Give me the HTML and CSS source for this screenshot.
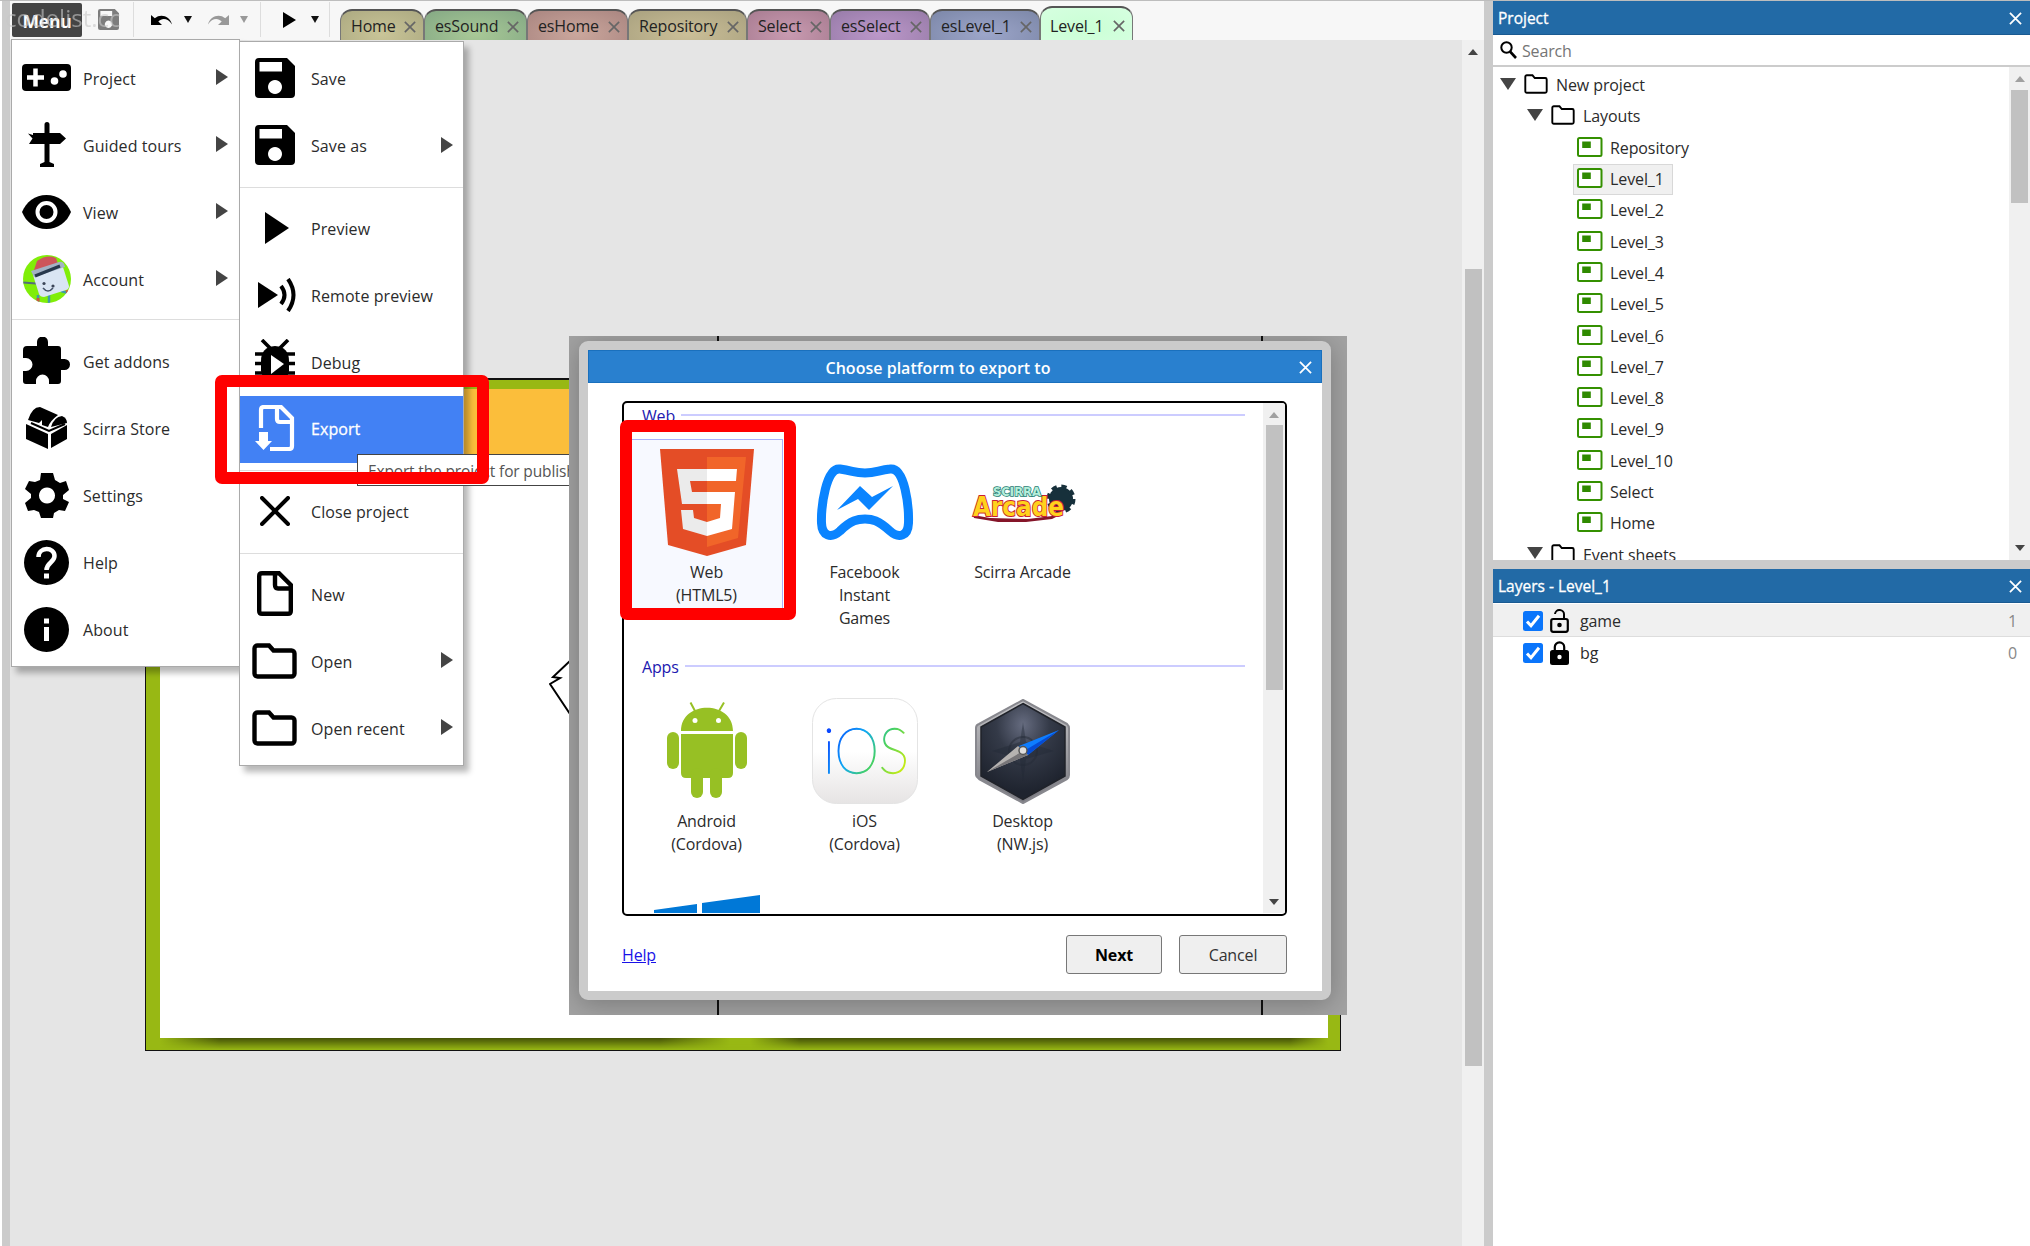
FILE: index.html
```html
<!DOCTYPE html>
<html lang="en">
<head>
<meta charset="utf-8">
<title>Level_1</title>
<link rel="stylesheet" href="styles.css">
</head>
<body>
<svg class="defs" width="0" height="0">
  <defs>
    <symbol id="save" viewBox="0 0 40 40"><path fill-rule="evenodd" d="M4 0H32L40 8V36a4 4 0 0 1-4 4H4a4 4 0 0 1-4-4V4a4 4 0 0 1 4-4ZM4.500 4V13.500H27V4ZM20 22a7 7 0 1 0 .01 0Z"/></symbol>
    <symbol id="folder" viewBox="0 0 45 36"><path d="M2.500 5.500a3 3 0 0 1 3-3H17l4.500 5H39.500a3 3 0 0 1 3 3V30.500a3 3 0 0 1-3 3H5.500a3 3 0 0 1-3-3Z" fill="none" stroke="#000" stroke-width="4.400"/></symbol>
    <symbol id="folder-s" viewBox="0 0 24 20"><path d="M1.300 2.800a1.500 1.500 0 0 1 1.500-1.500H8.500L10.800 4H21.200a1.500 1.500 0 0 1 1.500 1.500V17.200a1.500 1.500 0 0 1-1.500 1.500H2.800a1.500 1.500 0 0 1-1.500-1.500Z" fill="none" stroke="#000" stroke-width="1.900"/></symbol>
    <symbol id="sheet" viewBox="0 0 26 20"><rect x="1" y="1" width="23.500" height="18" rx="1.500" fill="#fff" stroke="#349000" stroke-width="2"/><rect x="5.200" y="4.500" width="8.600" height="6.500" fill="#2f8a00"/></symbol>
    <symbol id="x" viewBox="0 0 14 14"><path d="M1 1L13 13M13 1L1 13" fill="none" stroke="currentColor" stroke-width="1.900"/></symbol>
    <symbol id="undo" viewBox="0 0 24 12"><path d="M1 1V11H12L8.300 7.500C12 3.500 18 4 22 10.500C20 2.500 11-1 4.800 4.300Z"/></symbol>
  </defs>
</svg>

<div class="app">
  <div class="edge"></div>
  <main class="editor">
    <header class="toolbar">
      <div class="menu-btn">Menu</div>
      <div class="tool save"><svg width="21" height="21" fill="#7d7d7d"><use href="#save"/></svg></div>
      <div class="tool pair"><svg width="24" height="12"><use href="#undo"/></svg><i class="drop"></i><svg class="flip" width="24" height="12" fill="#999"><use href="#undo"/></svg><i class="drop off"></i></div>
      <div class="tool run"><svg width="13" height="16"><path d="M0 0L13 8L0 16Z"/></svg><i class="drop"></i></div>
      <nav class="tabs">
        <div class="tab t1">Home<svg><use href="#x"/></svg></div>
        <div class="tab t2">esSound<svg><use href="#x"/></svg></div>
        <div class="tab t3">esHome<svg><use href="#x"/></svg></div>
        <div class="tab t4">Repository<svg><use href="#x"/></svg></div>
        <div class="tab t5">Select<svg><use href="#x"/></svg></div>
        <div class="tab t6">esSelect<svg><use href="#x"/></svg></div>
        <div class="tab t7">esLevel_1<svg><use href="#x"/></svg></div>
        <div class="tab t8">Level_1<svg><use href="#x"/></svg></div>
      </nav>
    </header>
    <section class="stage">
      <div class="canvas">
        <div class="layout">
          <div class="sky"></div>
          <div class="shade"></div>
        </div>
        <svg class="spark" width="20" height="56"><path d="M21 2L4 18L11 19L1 25L21 55" fill="none" stroke="#000" stroke-width="2"/></svg>
      </div>
      <div class="scroll main-scroll"><i class="up dark"></i><b></b></div>
    </section>
  </main>
  <div class="edge split"></div>
  <aside class="side">
    <div class="bar">Project<svg><use href="#x"/></svg></div>
    <div class="search"><svg width="17" height="18" viewBox="0 0 17 18"><circle cx="6.500" cy="6.500" r="5.200" fill="none" stroke="#000" stroke-width="2"/><path d="M10 10.500L16 17" stroke="#000" stroke-width="2.600"/></svg>Search</div>
    <div class="tree-wrap">
      <ul class="tree">
        <li><i class="exp"></i><svg class="fold"><use href="#folder-s"/></svg>New project</li>
        <li class="l1"><i class="exp"></i><svg class="fold"><use href="#folder-s"/></svg>Layouts</li>
        <li class="l2"><span><svg><use href="#sheet"/></svg>Repository</span></li>
        <li class="l2"><span class="sel"><svg><use href="#sheet"/></svg>Level_1</span></li>
        <li class="l2"><span><svg><use href="#sheet"/></svg>Level_2</span></li>
        <li class="l2"><span><svg><use href="#sheet"/></svg>Level_3</span></li>
        <li class="l2"><span><svg><use href="#sheet"/></svg>Level_4</span></li>
        <li class="l2"><span><svg><use href="#sheet"/></svg>Level_5</span></li>
        <li class="l2"><span><svg><use href="#sheet"/></svg>Level_6</span></li>
        <li class="l2"><span><svg><use href="#sheet"/></svg>Level_7</span></li>
        <li class="l2"><span><svg><use href="#sheet"/></svg>Level_8</span></li>
        <li class="l2"><span><svg><use href="#sheet"/></svg>Level_9</span></li>
        <li class="l2"><span><svg><use href="#sheet"/></svg>Level_10</span></li>
        <li class="l2"><span><svg><use href="#sheet"/></svg>Select</span></li>
        <li class="l2"><span><svg><use href="#sheet"/></svg>Home</span></li>
        <li class="l1"><i class="exp"></i><svg class="fold"><use href="#folder-s"/></svg>Event sheets</li>
      </ul>
      <div class="scroll tree-scroll"><i class="up"></i><b></b><i class="down"></i></div>
    </div>
    <div class="hsplit"></div>
    <div class="bar">Layers - Level_1<svg><use href="#x"/></svg></div>
    <div class="layer on">
      <svg width="20" height="20" viewBox="0 0 20 20"><rect width="20" height="20" rx="2.500" fill="#0a75fb"/><path d="M4 10.500L8 14.800L16 4.800" fill="none" stroke="#fff" stroke-width="3"/></svg>
      <svg width="19" height="24" viewBox="0 0 19 24"><path d="M5 5a4.400 4.400 0 0 1 9 1V10" fill="none" stroke="#000" stroke-width="2"/><rect x="1.200" y="10" width="16.600" height="12.800" rx="2" fill="none" stroke="#000" stroke-width="2.200"/><circle cx="9.500" cy="16" r="2.300"/></svg>
      <span>game</span><em>1</em>
    </div>
    <div class="layer">
      <svg width="20" height="20" viewBox="0 0 20 20"><rect width="20" height="20" rx="2.500" fill="#0a75fb"/><path d="M4 10.500L8 14.800L16 4.800" fill="none" stroke="#fff" stroke-width="3"/></svg>
      <svg width="19" height="24" viewBox="0 0 19 24"><path d="M4.800 10V6a4.700 4.700 0 0 1 9.400 0V10" fill="none" stroke="#000" stroke-width="2.200"/><rect y="9" width="19" height="15" rx="2.500"/><circle cx="9.500" cy="16" r="2.200" fill="#fff"/></svg>
      <span>bg</span><em>0</em>
    </div>
  </aside>
</div>

<div class="watermark">codelist.cc</div>

<div class="menu first">
  <div class="item"><span class="ic"><svg width="49" height="27" viewBox="0 0 49 27"><rect width="49" height="27" rx="4"/><path d="M5 13.500H22M13.500 4.500V22.500" stroke="#fff" stroke-width="4.500"/><circle cx="32.500" cy="17" r="3.800" fill="#fff"/><circle cx="41" cy="10" r="3.800" fill="#fff"/></svg></span>Project<i class="sub"></i></div>
  <div class="item"><span class="ic"><svg width="38" height="45" viewBox="0 0 38 45"><path d="M16.500 11V2.500a2.500 2.500 0 0 1 5 0V11H32L38 16.500L32 22H21.500V40L26 42V45H12V42L16.500 40V22H1L4.500 16.500L0 11.500L5 13V11Z"/></svg></span>Guided tours<i class="sub"></i></div>
  <div class="item"><span class="ic"><svg width="49" height="34" viewBox="0 0 49 34"><path d="M0 17C4 7 13 0 24.500 0S45 7 49 17C45 27 36 34 24.500 34S4 27 0 17Z"/><circle cx="24.500" cy="17" r="9" stroke="#fff" stroke-width="4"/></svg></span>View<i class="sub"></i></div>
  <div class="item"><span class="ic"><svg width="48" height="48" viewBox="0 0 48 48"><clipPath id="av"><circle cx="24" cy="24" r="24"/></clipPath><g clip-path="url(#av)"><rect width="48" height="48" fill="#80ee08"/><path d="M15 40V48M26 38V48M38 36L45 38" stroke="#3f9aa8" stroke-width="2.500"/><path d="M0 27.500L13 28.500" stroke="#546c7c" stroke-width="2"/><path d="M10 20L39 9L46 31Q46 34 43 35L21 42Q17 42 16 39Z" fill="#d9e5f3"/><path d="M11 15L14 6Q24-1 33 3L35 9L13 17Z" fill="#cd555a"/><path d="M8 16L36 7Q41 6 42 12L11 22Z" fill="#a3b2c4"/><path d="M12 21L37 11" stroke="#27384c" stroke-width="3"/><path d="M20 33Q25 39 30 33" fill="none" stroke="#445268" stroke-width="1.500"/><circle cx="21" cy="28.500" r="1.600" fill="#3c4658"/><circle cx="30" cy="31" r="1.600" fill="#3c4658"/><path d="M15 43V48M43 37L47 36" stroke="#d0563e" stroke-width="3"/></g></svg></span>Account<i class="sub"></i></div>
  <hr>
  <div class="item"><span class="ic"><svg width="47" height="47" viewBox="0 0 47 47"><path d="M4 9H14V5a5.500 5.500 0 0 1 11 0V9H35Q38 9 38 12V22H41.500a5.500 5.500 0 0 1 0 11H38V44Q38 47 35 47H26V44a6.500 6.500 0 0 0-13 0V47H3Q0 47 0 44V34H3a6.500 6.500 0 0 0 0-13H0V13Q0 9 4 9Z"/></svg></span>Get addons</div>
  <div class="item"><span class="ic"><svg width="41" height="42" viewBox="0 0 41 42"><path d="M2 13Q6 0 14 0L32 8Q24 14 22 20L16 18V13L13 16Z"/><path d="M25 20Q28 10 36 9Q41 11 41 16Z"/><path d="M0 17L22 27V42L0 32ZM25 27L41 18V32L25 41Z"/><path d="M5 16L23 24L39 17" fill="none" stroke="#000" stroke-width="2"/></svg></span>Scirra Store</div>
  <div class="item"><span class="ic"><svg width="44" height="45" viewBox="0 0 44 45"><path fill-rule="evenodd" d="M16 0H28L30 7L35 10L41 8L44 17L38 22L38 26L44 29L40 38L34 37L29 40L28 45H16L14 39L9 37L3 38L0 30L6 25V21L0 16L4 8L10 9L15 7ZM22 14.500a8 8 0 1 0 .01 0Z"/></svg></span>Settings</div>
  <div class="item"><span class="ic"><svg width="45" height="45" viewBox="0 0 45 45"><circle cx="22.500" cy="22.500" r="22.500"/><path d="M14.500 17C14.500 6.500 30.500 6.500 30.500 16C30.500 22.500 22.500 22.500 22.500 30" fill="none" stroke="#fff" stroke-width="4.500"/><rect x="20" y="33.500" width="5" height="5" fill="#fff"/></svg></span>Help</div>
  <div class="item"><span class="ic"><svg width="45" height="45" viewBox="0 0 45 45"><circle cx="22.500" cy="22.500" r="22.500"/><path d="M20 11.500H25V16.500H20ZM20 20H25V34H20Z" fill="#fff"/></svg></span>About</div>
</div>

<div class="menu second">
  <div class="item"><span class="ic"><svg width="40" height="40"><use href="#save"/></svg></span>Save</div>
  <div class="item"><span class="ic"><svg width="40" height="40"><use href="#save"/></svg></span>Save as<i class="sub"></i></div>
  <hr>
  <div class="item"><span class="ic"><svg width="24" height="32" viewBox="0 0 24 32" class="shift"><path d="M0 0L24 16L0 32Z"/></svg></span>Preview</div>
  <div class="item"><span class="ic"><svg width="38" height="34" viewBox="0 0 38 34" class="shift"><path d="M0 4L20 17L0 30Z"/><path d="M23 8Q30 17 23 26M30 1Q41 17 30 33" fill="none" stroke="#000" stroke-width="4"/></svg></span>Remote preview</div>
  <div class="item"><span class="ic"><svg width="40" height="46" viewBox="0 0 40 46"><path d="M7 1L16 10M33 1L24 10M0 15H40M0 24.500H40M0 34H40" fill="none" stroke="#000" stroke-width="3.600"/><path d="M6 22Q6 8 20 7Q34 8 34 22V32Q32 44 20 46Q8 44 6 32Z"/><path d="M16 16L29 25L16 35Z" fill="#fff"/></svg></span>Debug</div>
  <div class="item hot"><span class="ic"><svg width="40" height="46" viewBox="0 0 40 46"><path d="M6 23V5Q6 2 9 2H26L37 13V41Q37 44 34 44H15M22 2V14Q22 17 25 17H37" fill="none" stroke="#fff" stroke-width="4.200"/><path d="M4 27H13V36H17L8.500 45L0 36H4Z" fill="#fff"/></svg></span>Export</div>
  <hr>
  <div class="item"><span class="ic"><svg width="30" height="30" viewBox="0 0 30 30"><path d="M2 2L28 28M28 2L2 28" stroke="#000" stroke-width="4" stroke-linecap="round"/></svg></span>Close project</div>
  <hr>
  <div class="item"><span class="ic"><svg width="36" height="45" viewBox="0 0 36 45"><path d="M2.200 5Q2.200 2.200 5 2.200H22L33.800 14V40Q33.800 42.800 31 42.800H5Q2.200 42.800 2.200 40ZM18 2V14Q18 17.500 21 17.500H34" fill="none" stroke="#000" stroke-width="4.400"/></svg></span>New</div>
  <div class="item"><span class="ic"><svg width="45" height="36"><use href="#folder"/></svg></span>Open<i class="sub"></i></div>
  <div class="item"><span class="ic"><svg width="45" height="36"><use href="#folder"/></svg></span>Open recent<i class="sub"></i></div>
</div>

<div class="tooltip">Export the project for publishing</div>

<div class="backdrop">
  <div class="dialog">
    <div class="title">Choose platform to export to<svg><use href="#x"/></svg></div>
    <div class="content">
      <div class="list">
        <div class="groups">
          <h3><span>Web</span></h3>
          <div class="grid">
            <div class="plat picked"><svg viewBox="0 0 106 106"><path d="M6 0H100L92 96L53 107L14 96Z" fill="#e44d26"/><path d="M53 8H92L84 89L53 98Z" fill="#f16529"/><path d="M53 20H23L28 55H53V43H38L36 32H53ZM53 73L40 69L39 61H27L29 80L53 87Z" fill="#ebebeb"/><path d="M53 20H83L82 32H53ZM53 43H81L78 80L53 87V73L66 69L67 55H53Z" fill="#fff"/></svg><p>Web<br>(HTML5)</p></div>
            <div class="plat"><svg viewBox="0 0 106 106"><path d="M28 20C42 22 42 24 53 24S67 21 78 20C93 18 97 58 96.500 74C96 87 87 90 78 82C66 71 60 70 53 70S39 71 28 82C19 90 10 87 9.500 74C9 58 14 18 28 20Z" fill="none" stroke="#0a84ff" stroke-width="9"/><path d="M25 61L48 37L60 48L81 37L57 61L46 50Z" fill="#0a84ff"/></svg><p>Facebook<br>Instant<br>Games</p></div>
            <div class="plat"><svg viewBox="0 0 106 106"><circle cx="91" cy="50" r="12" fill="#17303b"/><circle cx="91" cy="50" r="12" fill="none" stroke="#17303b" stroke-width="5" stroke-dasharray="5 4.420"/><path d="M3 66L20 69L58 70L90 66L82 70L56 73H28L4 69Z" fill="#851529"/><text x="3" y="67" class="arc" textLength="91" lengthAdjust="spacingAndGlyphs">Arcade</text><text x="23" y="47" class="scirra" textLength="48" lengthAdjust="spacingAndGlyphs">SCIRRA</text></svg><p>Scirra Arcade</p></div>
          </div>
          <h3><span>Apps</span></h3>
          <div class="grid apps">
            <div class="plat"><svg viewBox="0 0 106 106"><g fill="#97c024"><path d="M27 33C27 2 79 2 79 33ZM27 36H79V75Q79 80 74 80H32Q27 80 27 75Z"/><rect x="13" y="34" width="12" height="37" rx="6"/><rect x="81" y="34" width="12" height="37" rx="6"/><rect x="37" y="70" width="12" height="30" rx="6"/><rect x="56" y="70" width="12" height="30" rx="6"/></g><path d="M41 13L36.500 4.500M65 13L70 4.500" stroke="#97c024" stroke-width="2"/><circle cx="41" cy="22.500" r="2.500" fill="#fff"/><circle cx="64.500" cy="22.500" r="2.500" fill="#fff"/></svg><p>Android<br>(Cordova)</p></div>
            <div class="plat"><svg viewBox="0 0 106 106"><defs><linearGradient id="ibg" x2="0" y2="1"><stop offset=".5" stop-color="#fff"/><stop offset="1" stop-color="#e6e4e4"/></linearGradient><linearGradient id="itx" gradientUnits="userSpaceOnUse" x1="20" y1="32" x2="90" y2="75"><stop stop-color="#0a48ff"/><stop offset=".35" stop-color="#10a8f4"/><stop offset=".62" stop-color="#43cf68"/><stop offset="1" stop-color="#cbed10"/></linearGradient></defs><rect x=".5" y=".5" width="105" height="105" rx="24" fill="url(#ibg)" stroke="#e4e4e4"/><text x="11" y="75" class="ios" fill="url(#itx)" stroke="url(#itx)" textLength="86" lengthAdjust="spacingAndGlyphs">iOS</text></svg><p>iOS<br>(Cordova)</p></div>
            <div class="plat"><svg viewBox="0 0 106 106"><defs><linearGradient id="rim" x2="0" y2="1"><stop stop-color="#c5c5c8"/><stop offset="1" stop-color="#77777e"/></linearGradient><radialGradient id="face" cx=".5" cy=".22" r=".7"><stop stop-color="#666c80"/><stop offset=".45" stop-color="#343a48"/><stop offset="1" stop-color="#1f242f"/></radialGradient></defs><path d="M53 2L97 26Q99 28 99 30V77Q99 80 97 81L53 105L9 81Q6 79 6 77V30Q6 27 9 26Z" fill="url(#rim)" stroke="#88888e" stroke-width="2" stroke-linejoin="round"/><path d="M53 5.500L95 29V78L53 101.500L11 78V29Z" fill="url(#face)" stroke="#20232a" stroke-width="1.500"/><circle cx="53" cy="53" r="14" fill="none" stroke="#252c38" stroke-width="2" opacity=".5"/><path d="M53 24L56 44L84 53L56 61L53 83L50 61L22 53L50 44Z" fill="#202735" opacity=".4"/><path d="M89 32L58 57L49 48Z" fill="#0e7dff"/><path d="M89 32L58 57L54 53Z" fill="#064bd3"/><path d="M17 74L48 48L58 57Z" fill="#b6b3b1"/><path d="M17 74L53 53L58 57Z" fill="#777578"/><circle cx="53" cy="52.500" r="4" fill="#dedede" stroke="#555" stroke-width="1.500"/></svg><p>Desktop<br>(NW.js)</p></div>
            <div class="plat"><svg viewBox="0 0 106 106"><path d="M0 15L43 9V50H0ZM48 8L106 0V50H48ZM0 55H43V96L0 90ZM48 55H106V105L48 97Z" fill="#0078d7"/></svg></div>
          </div>
        </div>
        <div class="scroll list-scroll"><i class="up"></i><b></b><i class="down"></i></div>
      </div>
      <div class="actions"><a>Help</a><button class="next">Next</button><button>Cancel</button></div>
    </div>
  </div>
</div>

<div class="mark export-mark"></div>
<div class="mark web-mark"></div>
</body>
</html>
```
FILE: styles.css
```css
* { box-sizing: border-box; }
body {
  margin: 0; width: 2030px; height: 1246px; overflow: hidden; position: relative;
  font: 16px/23px "Open Sans", "Noto Sans", sans-serif; letter-spacing: -0.15px;
  color: #2b2b2b; background: #fff;
}
svg { display: block; flex: none; }
.defs { position: absolute; }
.app { display: flex; height: 1246px; border-top: 1px solid #bdbdbd; padding-left: 2px; }
.edge { width: 8px; background: #cbcbcb; flex: none; }
.edge.split { width: 9px; }
.editor { width: 1474px; display: flex; flex-direction: column; flex: none; }

.toolbar { height: 39px; background: #f7f7f7; display: flex; align-items: stretch; flex: none; padding-left: 2px; }
.menu-btn { width: 70px; height: 34px; margin-top: 2px; background: #444; color: #fff; font-weight: 700; font-size: 17.500px; line-height: 37px; text-align: center; border-radius: 2px; }
.tool { display: flex; align-items: center; border-right: 1px solid #ddd; height: 35px; margin-top: 1px; }
.tool.save { width: 52px; padding-left: 16px; }
.tool.pair { width: 127px; padding-left: 16px; }
.tool.run { width: 69px; padding-left: 22px; }
.drop { border: 4px solid transparent; border-top: 7px solid #111; border-bottom: 0; margin-left: 10px; }
.pair .drop { margin-right: 14px; }
.run .drop { margin-left: 15px; }
.drop.off { border-top-color: #999; }
.flip { transform: scaleX(-1); }
.tabs { display: flex; align-items: flex-end; margin-left: 10px; }
.tab {
  height: 31px; border: 1px solid #777; border-top: 2px solid #555; border-bottom: 0; border-radius: 12px 12px 0 0;
  padding: 4px 7px 0 10px; display: flex; justify-content: space-between; color: #222; flex: none;
}
.tab svg { width: 12px; height: 12px; margin-top: 6px; color: #666; }
.t1 { width: 84px; background: radial-gradient(ellipse at 50% 80%, #c9c598, #aca981); }
.t2 { width: 103px; background: radial-gradient(ellipse at 50% 80%, #a9c997, #84a884); }
.t3 { width: 101px; background: radial-gradient(ellipse at 50% 80%, #cba79d, #a98580); }
.t4 { width: 119px; background: radial-gradient(ellipse at 50% 80%, #cbbf98, #a9a17f); }
.t5 { width: 83px; background: radial-gradient(ellipse at 50% 80%, #c99bb1, #a87c91); }
.t6 { width: 100px; background: radial-gradient(ellipse at 50% 80%, #bc98ca, #977ba8); }
.t7 { width: 110px; background: radial-gradient(ellipse at 50% 80%, #9da6ca, #7c87a8); }
.t8 { width: 93px; height: 34px; background: radial-gradient(ellipse at 50% 60%, #caffd5, #d6ffe0); padding: 7px 7px 0 9px; }
.t8 svg { margin-top: 5px; }

.stage { flex: 1; display: flex; }
.canvas { flex: 1; background: #e5e5e5; position: relative; overflow: hidden; }
.layout { position: absolute; left: 135px; top: 338px; width: 1196px; height: 673px; border: 2px solid #111; border-width: 2px 1px 1px; background: #98b814; padding: 9px 12px 12px 14px; }
.sky { height: 649px; background: linear-gradient(#fbbe3b 66px, #fff 66px); }
.shade { height: 12px; background: linear-gradient(90deg, #98b814 0, #445207 60px, #445207 500px, #98b814 570px, #98b814 590px, #445207 640px, #445207 1130px, #98b814 1168px); -webkit-mask: linear-gradient(#000, transparent); mask: linear-gradient(#000, transparent); }
.spark { position: absolute; left: 539px; top: 619px; }
.scroll { background: #f0f0f0; width: 22px; flex: none; display: flex; flex-direction: column; align-items: center; }
.scroll b { background: #c1c1c1; width: 17px; }
.up, .down { border: 5px solid transparent; flex: none; }
.up { border-bottom: 6px solid #a0a0a0; border-top: 0; }
.up.dark { border-bottom-color: #444; }
.down { border-top: 6px solid #444; border-bottom: 0; margin-top: auto; }
.main-scroll { padding-top: 9px; }
.main-scroll b { height: 797px; margin-top: 214px; }

.side { flex: 1; display: flex; flex-direction: column; min-width: 0; background: #fff; }
.bar { height: 34px; background: #226aa6; border-bottom: 1px solid #1a5a91; color: #fff; font-size: 15.500px; letter-spacing: 0; -webkit-text-stroke: 0.300px #fff; display: flex; align-items: center; justify-content: space-between; padding: 2px 8px 0 5px; flex: none; }
.bar svg, .title svg { width: 13px; height: 13px; }
.search { height: 32px; border-bottom: 2px solid #ccc; display: flex; align-items: center; gap: 5px; padding: 3px 0 0 7px; color: #757575; font-size: 16px; flex: none; }
.search svg { margin-top: -4px; }
.tree-wrap { display: flex; height: 493px; flex: none; overflow: hidden; }
.tree { list-style: none; margin: 0; padding: 2px 0 0 7px; flex: 1; font-size: 16px; letter-spacing: -0.1px; overflow: hidden; }
.tree li { height: 31.300px; display: flex; align-items: center; padding-top: 2px; }
.tree .l1 { padding-left: 27px; }
.tree .l2 { padding-left: 73px; }
.exp { border: 8px solid transparent; border-top: 12px solid #444; border-bottom: 0; margin: -4px 8px 0 0; }
.fold { width: 24px; height: 20px; margin: -3px 8px 0 0; }
.tree span { display: flex; align-items: center; height: 31px; padding: 0 8px 0 3px; border: 1px solid transparent; }
.tree span svg { width: 26px; height: 20px; margin: -3px 7px 0 0; }
.tree .sel { background: #f0f0f0; border-color: #d8d8d8; }
.tree-scroll { width: 21px; padding: 9px 0 9px; align-items: center; }
.tree-scroll b { height: 113px; margin-top: 8px; }
.hsplit { height: 9px; background: #cbcbcb; flex: none; }
.layer { height: 32px; display: flex; align-items: center; padding: 0 13px 0 30px; gap: 7px; flex: none; }
.layer.on { height: 33px; background: #f0f0f0; border-bottom: 1px solid #ddd; padding-top: 2px; margin-top: 1px; }
.layer span { flex: 1; margin-left: 4px; padding-top: 1px; }
.layer em { font-style: normal; color: #888; padding-top: 1px; }

.watermark { position: absolute; left: 5px; top: 2px; font-size: 24px; line-height: 32px; letter-spacing: 0; width: 121px; overflow: hidden; color: #c8c8c8; opacity: .6; }

.menu { position: absolute; background: #fff; border: 1px solid #aaa; box-shadow: 5px 6px 6px rgba(0,0,0,.28); letter-spacing: 0.080px; }
.menu.first { left: 11px; top: 39px; width: 229px; height: 628px; padding-top: 5px; }
.menu.second { left: 239px; top: 41px; width: 225px; height: 725px; padding-top: 4px; }
.item { height: 66.800px; display: flex; align-items: center; padding: 1px 10px 0 0; }
.first .item { height: 67.100px; padding-right: 11px; }
.ic { width: 70px; padding-right: 1px; margin: -3px 1px 0 0; flex: none; display: flex; justify-content: center; }
.ic .shift { margin-left: 5px; }
.sub { border: 8px solid transparent; border-left: 12px solid #444; border-right: 0; margin: -4px 0 0 auto; }
.menu hr { border: 0; height: 1px; background: #ddd; margin: 7px 0 8px; }
.first hr { margin: 6px 0 8px; }
.hot { background: #4281f4; color: #fff; -webkit-text-stroke: 0.300px #fff; }

.tooltip { position: absolute; left: 357px; top: 454px; width: 230px; height: 32px; background: #fff; border: 1px solid #444; padding: 5px 10px; white-space: nowrap; overflow: hidden; color: #555; font-size: 15.500px; }

.backdrop { position: absolute; left: 569px; top: 336px; width: 778px; height: 679px; padding: 5px 16px 14px 10px; overflow: hidden;
  background: linear-gradient(90deg, transparent 148px, #111 148px, #111 150px, transparent 150px, transparent 692px, #111 692px, #111 694px, transparent 694px), #a2a2a2; }
.dialog { height: 659px; border: 9px solid #cbcbcb; border-radius: 9px; box-shadow: 0 4px 26px rgba(0,0,0,.25); background: #fff; position: relative; }
.title { height: 33px; background: #2980cf; border: 1px solid #1a70bd; color: #fff; font-weight: 600; letter-spacing: 0.020px; display: flex; align-items: center; justify-content: center; padding: 3px 34px 0 0; }
.title svg { position: absolute; right: 10px; top: 11px; }
.content { padding: 18px 35px 0 34px; }
.list { height: 515px; border: 2px solid #000; border-radius: 5px; display: flex; padding: 0 0 1px 0; overflow: hidden; background: #fff; }
.groups { flex: 1; margin-top: -18px; height: 528px; overflow: hidden; padding: 0 18px 0 6px; }
.groups h3 { margin: 0; height: 54px; padding: 8px 0 0 12px; display: flex; align-items: center; gap: 6px; font-size: 16px; font-weight: 400; color: #2118b0; }
.groups h3::after { content: ""; height: 2px; flex: 1; background: #ccf; margin-top: -3px; }
.groups h3 span { padding-top: 1px; }
.grid { display: grid; grid-template-columns: repeat(3, 158px); grid-auto-rows: 197px; }
.plat { padding: 9px 0; text-align: center; border: 1px solid transparent; margin-right: 5px; }
.plat svg { width: 106px; height: 106px; margin: 0 auto 6px; overflow: visible; }
.apps .plat { padding-top: 7px; }
.plat p { margin: 0; }
.picked { background: #f7f9ff; border-color: #aab0fa; margin-bottom: 18px; }
.arc { font: 700 27px "DejaVu Sans", sans-serif; letter-spacing: 0; fill: #ffd21c; stroke: #c81f36; stroke-width: 2px; paint-order: stroke; }
.scirra { font: 700 12px "DejaVu Sans", sans-serif; letter-spacing: 0; fill: #b5eedb; stroke: #1d7a70; stroke-width: 1.500px; paint-order: stroke; }
.ios { font: 100 62px "Lato", sans-serif; letter-spacing: 0; stroke-width: 1.300px; }
.list-scroll { padding: 9px 0 8px; }
.list-scroll b { height: 265px; margin-top: 7px; }
.actions { display: flex; align-items: center; padding-top: 19px; }
.actions a { color: #1a12e8; text-decoration: underline; margin: 2px auto 0 0; }
.actions button { width: 108px; height: 39px; margin-left: 17px; background: #efefef; border: 1px solid #777; border-radius: 3px; font: inherit; letter-spacing: inherit; color: #333; padding: 2px 0 0; }
.actions .next { width: 96px; font-weight: 700; color: #000; }

.mark { position: absolute; border: 12px solid #f00; border-radius: 7px; }
.export-mark { left: 215px; top: 375px; width: 274px; height: 109px; }
.web-mark { left: 620px; top: 420px; width: 176px; height: 200px; }
```
